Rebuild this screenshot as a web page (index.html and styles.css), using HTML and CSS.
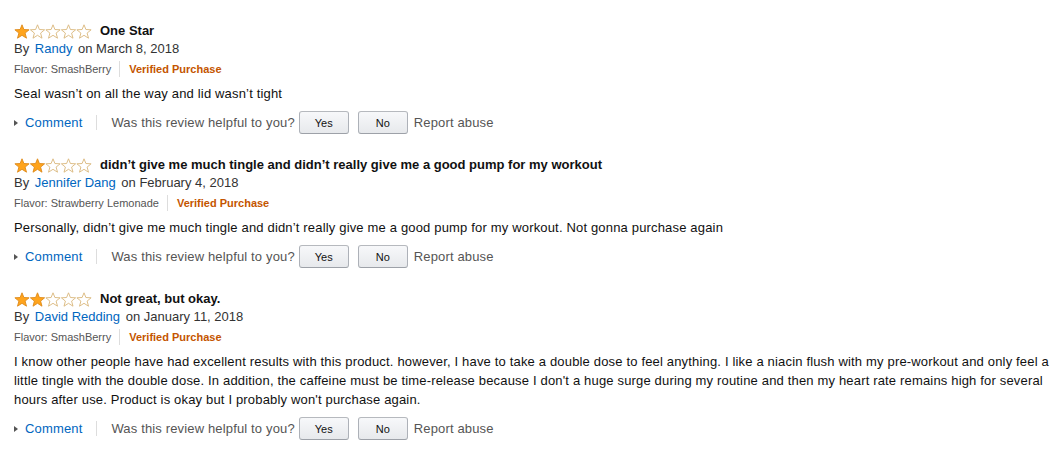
FILE: index.html
```html
<!DOCTYPE html>
<html>
<head>
<meta charset="utf-8">
<link rel="stylesheet" href="styles.css">
</head>
<body>
<svg width="0" height="0" class="defs">
  <defs>
    <path id="star" d="M8 0.8 L9.9 5.5 L15.1 5.8 L11.1 9.1 L12.5 14.2 L8 11.3 L3.5 14.2 L4.9 9.1 L0.9 5.8 L6.1 5.5 Z"/>
  </defs>
</svg>

<div class="reviews">
  <div class="review">
    <div class="title-row">
      <svg class="stars" width="78" height="15" viewBox="0 0 78 15">
        <use href="#star" class="on"/>
        <use href="#star" class="off" x="15.5"/>
        <use href="#star" class="off" x="31"/>
        <use href="#star" class="off" x="46.5"/>
        <use href="#star" class="off" x="62"/>
      </svg>
      <span class="title">One Star</span>
    </div>
    <div class="byline">By <a class="link author">Randy</a> on March 8, 2018</div>
    <div class="meta"><span class="flavor">Flavor: SmashBerry</span><span class="verified">Verified Purchase</span></div>
    <div class="body">Seal wasn’t on all the way and lid wasn’t tight</div>
    <div class="actions">
      <span class="caret"></span><a class="link comment">Comment</a>
      <span class="helpful">Was this review helpful to you?</span>
      <span class="btn">Yes</span><span class="btn">No</span>
      <span class="report">Report abuse</span>
    </div>
  </div>

  <div class="review">
    <div class="title-row">
      <svg class="stars" width="78" height="15" viewBox="0 0 78 15">
        <use href="#star" class="on"/>
        <use href="#star" class="on" x="15.5"/>
        <use href="#star" class="off" x="31"/>
        <use href="#star" class="off" x="46.5"/>
        <use href="#star" class="off" x="62"/>
      </svg>
      <span class="title">didn’t give me much tingle and didn’t really give me a good pump for my workout</span>
    </div>
    <div class="byline">By <a class="link author">Jennifer Dang</a> on February 4, 2018</div>
    <div class="meta"><span class="flavor">Flavor: Strawberry Lemonade</span><span class="verified">Verified Purchase</span></div>
    <div class="body">Personally, didn’t give me much tingle and didn’t really give me a good pump for my workout. Not gonna purchase again</div>
    <div class="actions">
      <span class="caret"></span><a class="link comment">Comment</a>
      <span class="helpful">Was this review helpful to you?</span>
      <span class="btn">Yes</span><span class="btn">No</span>
      <span class="report">Report abuse</span>
    </div>
  </div>

  <div class="review">
    <div class="title-row">
      <svg class="stars" width="78" height="15" viewBox="0 0 78 15">
        <use href="#star" class="on"/>
        <use href="#star" class="on" x="15.5"/>
        <use href="#star" class="off" x="31"/>
        <use href="#star" class="off" x="46.5"/>
        <use href="#star" class="off" x="62"/>
      </svg>
      <span class="title">Not great, but okay.</span>
    </div>
    <div class="byline">By <a class="link author">David Redding</a> on January 11, 2018</div>
    <div class="meta"><span class="flavor">Flavor: SmashBerry</span><span class="verified">Verified Purchase</span></div>
    <div class="body">I know other people have had excellent results with this product. however, I have to take a double dose to feel anything. I like a niacin flush with my pre-workout and only feel a little tingle with the double dose. In addition, the caffeine must be time-release because I don't a huge surge during my routine and then my heart rate remains high for several hours after use. Product is okay but I probably won't purchase again.</div>
    <div class="actions">
      <span class="caret"></span><a class="link comment">Comment</a>
      <span class="helpful">Was this review helpful to you?</span>
      <span class="btn">Yes</span><span class="btn">No</span>
      <span class="report">Report abuse</span>
    </div>
  </div>
</div>
</body>
</html>
```

FILE: styles.css
```css
html, body {
  margin: 0;
  padding: 0;
  background: #fff;
}
body {
  font-family: "Liberation Sans", Arial, sans-serif;
  font-size: 13px;
  color: #111;
}
.defs {
  position: absolute;
}
.reviews {
  padding: 22px 3px 0 14px;
  display: flex;
  flex-direction: column;
  gap: 22px;
}
.review {
  display: flex;
  flex-direction: column;
}
.title-row {
  display: flex;
  align-items: center;
  height: 18px;
}
.stars {
  display: block;
  margin-right: 8px;
}
.stars .on {
  fill: #ffa41c;
  stroke: #de8a1b;
  stroke-width: 0.9;
}
.stars .off {
  fill: #fff;
  stroke: #d9b77a;
  stroke-width: 0.9;
}
.title {
  font-weight: bold;
  line-height: 18px;
}
.byline {
  line-height: 18px;
  color: #333;
}
.link {
  color: #0066c0;
  text-decoration: none;
}
.author {
  margin: 0 2px;
}
.meta {
  margin-top: 3px;
  font-size: 11px;
  line-height: 16px;
  display: flex;
  align-items: center;
}
.flavor {
  color: #555;
  padding-right: 8px;
  border-right: 1px solid #ddd;
  margin-right: 9px;
}
.verified {
  color: #c45500;
  font-weight: bold;
}
.body {
  margin-top: 7px;
  line-height: 19px;
  letter-spacing: 0.17px;
}
.actions {
  margin-top: 8px;
  display: flex;
  align-items: center;
  height: 23px;
  color: #555;
  letter-spacing: 0.15px;
}
.caret {
  width: 0;
  height: 0;
  border-left: 4px solid #555;
  border-top: 3.5px solid transparent;
  border-bottom: 3.5px solid transparent;
  margin-right: 7px;
}
.comment {
  padding-right: 14px;
  border-right: 1px solid #ddd;
  margin-right: 14px;
  line-height: 15px;
}
.helpful {
  margin-right: 4px;
}
.btn {
  box-sizing: border-box;
  width: 50px;
  height: 23px;
  display: flex;
  align-items: center;
  justify-content: center;
  font-size: 11px;
  letter-spacing: 0;
  color: #111;
  border: 1px solid #adb1b8;
  border-top-color: #b6b9be;
  border-bottom-color: #9da1a8;
  border-radius: 3px;
  background: linear-gradient(#f7f8fa, #e7e9ec);
  margin-right: 9px;
}
.btn + .btn {
  margin-right: 6px;
}
.report {
  color: #555;
}
```
